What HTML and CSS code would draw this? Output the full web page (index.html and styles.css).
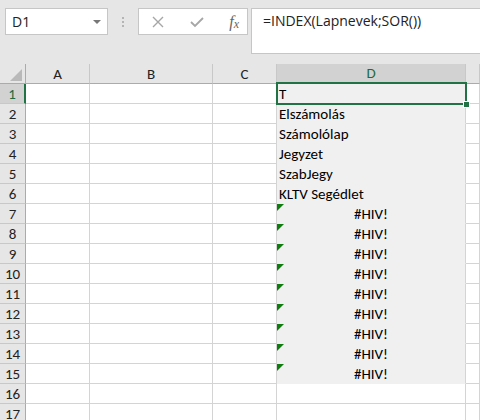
FILE: index.html
```html
<!DOCTYPE html>
<html>
<head>
<meta charset="utf-8">
<link rel="stylesheet" href="styles.css">
</head>
<body>
<div class="app">
  <div class="fbar">
    <div class="namebox"><span class="nb-text">D1</span><span class="nb-arrow"></span></div>
    <div class="grip"><i></i><i></i><i></i></div>
    <div class="fbtns">
      <svg class="ico" width="14" height="14" viewBox="0 0 14 14"><path d="M2 2 L12 12 M12 2 L2 12" stroke="#a6a6a6" stroke-width="1.4" fill="none"/></svg>
      <svg class="ico" width="16" height="14" viewBox="0 0 16 14"><path d="M2 7 L6 11 L14 3" stroke="#a6a6a6" stroke-width="1.8" fill="none"/></svg>
      <span class="fx">f<sub>x</sub></span>
    </div>
    <div class="finput">=INDEX(Lapnevek;SOR())</div>
  </div>
  <div class="sheet">
    <div class="corner"><span class="tri"></span></div>
    <div class="ch">A</div><div class="ch">B</div><div class="ch">C</div><div class="ch sel">D</div><div class="ch"></div>

    <div class="rh sel">1</div><div class="c"></div><div class="c"></div><div class="c"></div><div class="c d active">T<span class="selbox"><span class="handle"></span></span></div><div class="c"></div>
    <div class="rh">2</div><div class="c"></div><div class="c"></div><div class="c"></div><div class="c d">Elszámolás</div><div class="c"></div>
    <div class="rh">3</div><div class="c"></div><div class="c"></div><div class="c"></div><div class="c d">Számolólap</div><div class="c"></div>
    <div class="rh">4</div><div class="c"></div><div class="c"></div><div class="c"></div><div class="c d">Jegyzet</div><div class="c"></div>
    <div class="rh">5</div><div class="c"></div><div class="c"></div><div class="c"></div><div class="c d">SzabJegy</div><div class="c"></div>
    <div class="rh">6</div><div class="c"></div><div class="c"></div><div class="c"></div><div class="c d">KLTV Segédlet</div><div class="c"></div>
    <div class="rh">7</div><div class="c"></div><div class="c"></div><div class="c"></div><div class="c d err">#HIV!</div><div class="c"></div>
    <div class="rh">8</div><div class="c"></div><div class="c"></div><div class="c"></div><div class="c d err">#HIV!</div><div class="c"></div>
    <div class="rh">9</div><div class="c"></div><div class="c"></div><div class="c"></div><div class="c d err">#HIV!</div><div class="c"></div>
    <div class="rh">10</div><div class="c"></div><div class="c"></div><div class="c"></div><div class="c d err">#HIV!</div><div class="c"></div>
    <div class="rh">11</div><div class="c"></div><div class="c"></div><div class="c"></div><div class="c d err">#HIV!</div><div class="c"></div>
    <div class="rh">12</div><div class="c"></div><div class="c"></div><div class="c"></div><div class="c d err">#HIV!</div><div class="c"></div>
    <div class="rh">13</div><div class="c"></div><div class="c"></div><div class="c"></div><div class="c d err">#HIV!</div><div class="c"></div>
    <div class="rh">14</div><div class="c"></div><div class="c"></div><div class="c"></div><div class="c d err">#HIV!</div><div class="c"></div>
    <div class="rh">15</div><div class="c"></div><div class="c"></div><div class="c"></div><div class="c d err">#HIV!</div><div class="c"></div>
    <div class="rh">16</div><div class="c"></div><div class="c"></div><div class="c"></div><div class="c"></div><div class="c"></div>
    <div class="rh">17</div><div class="c"></div><div class="c"></div><div class="c"></div><div class="c"></div><div class="c"></div>
  </div>
</div>
</body>
</html>
```
FILE: styles.css
```css
* { box-sizing: border-box; }
html, body { margin: 0; padding: 0; }
body {
  width: 480px; height: 420px; overflow: hidden;
  background: #e6e6e6;
  font-family: "Carlito", "Lato", "Liberation Sans", sans-serif;
}
.app { width: 480px; height: 420px; overflow: hidden; }

.fbar {
  display: flex; align-items: flex-start;
  height: 64px; padding: 8px 0 0 5px;
}
.namebox {
  width: 103px; height: 27px;
  background: #fff; border: 1px solid #c6c6c6;
  display: flex; align-items: center; justify-content: space-between;
  padding: 0 6px 0 6px;
  font-family: "Open Sans", "Noto Sans", sans-serif; font-size: 14px; color: #222;
}
.nb-arrow {
  width: 0; height: 0;
  border-left: 4px solid transparent; border-right: 4px solid transparent;
  border-top: 4px solid #777;
}
.grip {
  width: 30px; height: 27px;
  display: flex; flex-direction: column; align-items: center; justify-content: center; gap: 2px;
}
.grip i { display: block; width: 2px; height: 2px; background: #b4b4b4; }
.fbtns {
  width: 110px; height: 27px;
  background: #fff; border: 1px solid #c6c6c6;
  display: flex; align-items: center; justify-content: space-between;
  padding: 0 8px 0 12px;
}
.fx {
  font-family: "Liberation Serif", serif; font-style: italic; font-size: 16px; color: #666;
  line-height: 1;
}
.fx sub { font-size: 12px; vertical-align: -1px; }
.finput {
  flex: 1; height: 46px; margin-left: 3px; margin-right: -2px;
  background: #fff; border: 1px solid #c6c6c6;
  font-family: "Open Sans", "Noto Sans", sans-serif; font-size: 14px; color: #222;
  padding: 2px 0 0 11px;
}

.sheet {
  display: grid;
  grid-template-columns: 26px 64px 123px 64px 189px 1fr;
  grid-auto-rows: 20px;
  background: #fff;
}
.corner, .ch, .rh { background: #e6e6e6; color: #222; }
.corner {
  position: relative;
  border-right: 1px solid #ababab; border-bottom: 1px solid #ababab;
}
.tri {
  position: absolute; right: 3px; bottom: 2px; width: 0; height: 0;
  border-left: 12px solid transparent; border-bottom: 12px solid #b9b9b9;
}
.ch {
  border-right: 1px solid #c8c8c8; border-bottom: 1px solid #ababab;
  display: flex; align-items: center; justify-content: center;
  font-size: 15px;
}
.ch.sel { background: #d2d2d2; color: #1e6b41; border-bottom: 2px solid #217346; }
.rh {
  border-right: 1px solid #ababab; border-bottom: 1px solid #c8c8c8;
  display: flex; align-items: center; justify-content: center;
  font-size: 15px; padding-top: 1px;
}
.rh.sel { background: #d2d2d2; color: #1e6b41; border-right: 2px solid #217346; }
.c {
  border-right: 1px solid #d4d4d4; border-bottom: 1px solid #d4d4d4;
  font-size: 15px; color: #000;
  display: flex; align-items: flex-end; padding: 0 2px;
  line-height: 18px;
  position: relative;
}
.c.d { background: #f0f0f0; border-bottom-color: #f0f0f0; }
.c.err { justify-content: center; }
.c.err::before {
  content: ""; position: absolute; left: 0; top: 0; width: 0; height: 0;
  border-top: 7px solid #107c10; border-right: 7px solid transparent;
}
.selbox {
  position: absolute; left: -1px; top: -2px; width: 191px; height: 23px;
  border: 2px solid #217346;
  z-index: 2;
}
.handle {
  position: absolute; right: -5px; bottom: -5px; width: 7px; height: 7px;
  background: #217346; border: 1px solid #fff;
}
```
